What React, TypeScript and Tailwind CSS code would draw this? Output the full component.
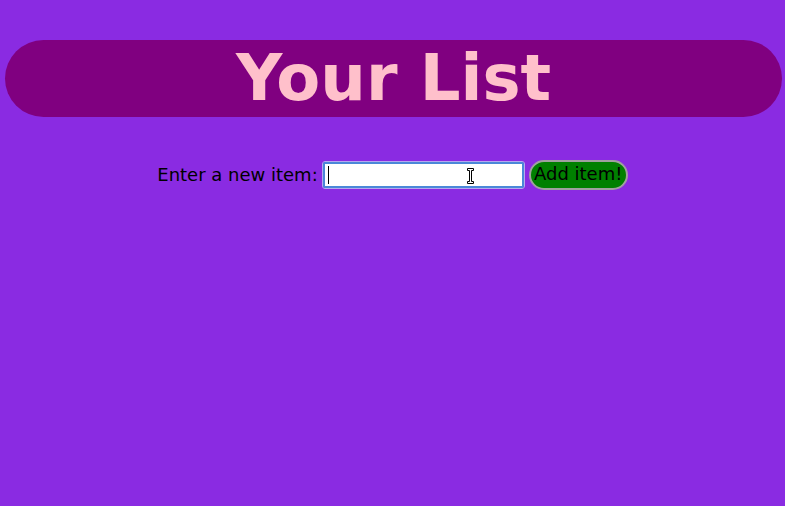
export default function App() {
  return (
    <div className="min-h-screen w-full bg-[#8a2be2] pt-[40px] font-['DejaVu_Sans',sans-serif]">
      <div className="ml-[5px] flex h-[77px] w-[777px] items-center justify-center rounded-full bg-[#800080]">
        <h1 className="-mt-[2px] text-[64px] font-bold leading-none text-[#ffc0cb]">Your List</h1>
      </div>
      <div className="mt-[43px] flex items-center justify-center text-[18px] text-black">
        <span className="-mt-[2px] mr-[4px]">Enter a new item:</span>
        <div className="rounded-[3px] border border-[#b4a8f0]">
          <div className="relative flex h-[26px] w-[201px] items-center rounded-[2px] border-2 border-[#4a88d8] bg-white pl-[3px]">
            <div className="h-[18px] w-px bg-black" />
            <svg className="absolute left-[141px] top-[3px]" width="9" height="18" viewBox="0 0 9 18">
              <path
                d="M1.5 1.5 H7.5 V3.5 H5.5 V14.5 H7.5 V16.5 H1.5 V14.5 H3.5 V3.5 H1.5 Z"
                fill="white"
                stroke="black"
                strokeWidth="1"
              />
            </svg>
          </div>
        </div>
        <button className="ml-[4px] h-[30px] w-[99px] rounded-full border-2 border-[#a0a0a0] bg-[#008000] pb-[2px] text-[18px] leading-none text-black">
          Add item!
        </button>
      </div>
    </div>
  );
}
